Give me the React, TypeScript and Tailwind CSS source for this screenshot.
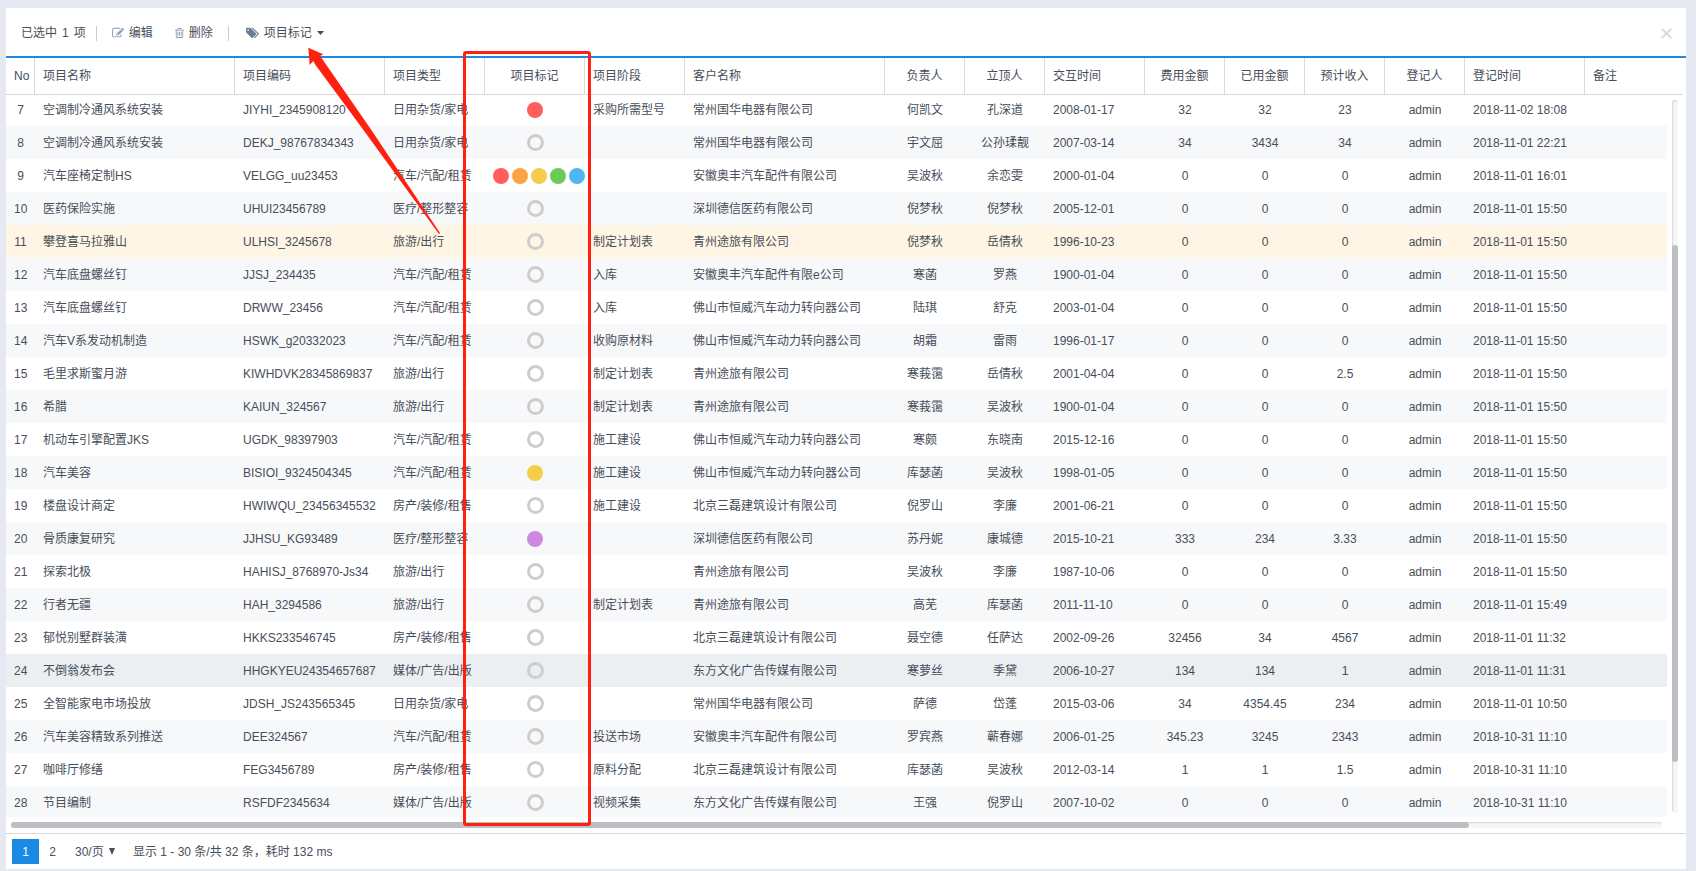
import React, { useState } from "react";
import clsx from "clsx";

type Mark = "red" | "orange" | "yellow" | "green" | "blue" | "purple";

interface Project {
  no: number;
  name: string;
  code: string;
  type: string;
  marks: Mark[];
  stage: string;
  customer: string;
  owner: string;
  leader: string;
  date: string;
  cost: string;
  used: string;
  income: string;
  createdAt: string;
}

const markColors: Record<Mark, string> = {
  red: "bg-[#ff5f5c]",
  orange: "bg-[#fba446]",
  yellow: "bg-[#f5cd4b]",
  green: "bg-[#6dcb54]",
  blue: "bg-[#4db6f3]",
  purple: "bg-[#d087e2]",
};

const columns = [
  { title: "No", width: "w-[29px]", center: true },
  { title: "项目名称", width: "w-[200px]" },
  { title: "项目编码", width: "w-[150px]" },
  { title: "项目类型", width: "w-[100px]" },
  { title: "项目标记", width: "w-[100px]", center: true },
  { title: "项目阶段", width: "w-[100px]" },
  { title: "客户名称", width: "w-[200px]" },
  { title: "负责人", width: "w-[80px]", center: true },
  { title: "立顶人", width: "w-[80px]", center: true },
  { title: "交互时间", width: "w-[100px]" },
  { title: "费用金额", width: "w-[80px]", center: true },
  { title: "已用金额", width: "w-[80px]", center: true },
  { title: "预计收入", width: "w-[80px]", center: true },
  { title: "登记人", width: "w-[80px]", center: true },
  { title: "登记时间", width: "w-[120px]" },
  { title: "备注", width: "" },
];

function project(
  no: number,
  name: string,
  code: string,
  type: string,
  marks: Mark[],
  stage: string,
  customer: string,
  owner: string,
  leader: string,
  date: string,
  amounts: [string, string, string],
  createdAt: string,
): Project {
  const [cost, used, income] = amounts;
  return { no, name, code, type, marks, stage, customer, owner, leader, date, cost, used, income, createdAt };
}

const ZERO: [string, string, string] = ["0", "0", "0"];
const CAR = "汽车/汽配/租赁";
const TRAVEL = "旅游/出行";
const HOME = "日用杂货/家电";
const HOUSE = "房产/装修/租售";
const MEDICAL = "医疗/整形整容";
const MEDIA = "媒体/广告/出版";

const projects: Project[] = [
  project(7, "空调制冷通风系统安装", "JIYHI_2345908120", HOME, ["red"], "采购所需型号", "常州国华电器有限公司", "何凯文", "孔深道", "2008-01-17", ["32", "32", "23"], "2018-11-02 18:08"),
  project(8, "空调制冷通风系统安装", "DEKJ_98767834343", HOME, [], "", "常州国华电器有限公司", "宇文屈", "公孙瑈靓", "2007-03-14", ["34", "3434", "34"], "2018-11-01 22:21"),
  project(9, "汽车座椅定制HS", "VELGG_uu23453", CAR, ["red", "orange", "yellow", "green", "blue"], "", "安徽奥丰汽车配件有限公司", "吴波秋", "余恋雯", "2000-01-04", ZERO, "2018-11-01 16:01"),
  project(10, "医药保险实施", "UHUI23456789", MEDICAL, [], "", "深圳德信医药有限公司", "倪梦秋", "倪梦秋", "2005-12-01", ZERO, "2018-11-01 15:50"),
  project(11, "攀登喜马拉雅山", "ULHSI_3245678", TRAVEL, [], "制定计划表", "青州途旅有限公司", "倪梦秋", "岳倩秋", "1996-10-23", ZERO, "2018-11-01 15:50"),
  project(12, "汽车底盘螺丝钉", "JJSJ_234435", CAR, [], "入库", "安徽奥丰汽车配件有限e公司", "寒菡", "罗燕", "1900-01-04", ZERO, "2018-11-01 15:50"),
  project(13, "汽车底盘螺丝钉", "DRWW_23456", CAR, [], "入库", "佛山市恒威汽车动力转向器公司", "陆琪", "舒克", "2003-01-04", ZERO, "2018-11-01 15:50"),
  project(14, "汽车V系发动机制造", "HSWK_g20332023", CAR, [], "收购原材料", "佛山市恒威汽车动力转向器公司", "胡霜", "雷雨", "1996-01-17", ZERO, "2018-11-01 15:50"),
  project(15, "毛里求斯蜜月游", "KIWHDVK28345869837", TRAVEL, [], "制定计划表", "青州途旅有限公司", "寒莪霭", "岳倩秋", "2001-04-04", ["0", "0", "2.5"], "2018-11-01 15:50"),
  project(16, "希腊", "KAIUN_324567", TRAVEL, [], "制定计划表", "青州途旅有限公司", "寒莪霭", "吴波秋", "1900-01-04", ZERO, "2018-11-01 15:50"),
  project(17, "机动车引擎配置JKS", "UGDK_98397903", CAR, [], "施工建设", "佛山市恒威汽车动力转向器公司", "寒颇", "东晓南", "2015-12-16", ZERO, "2018-11-01 15:50"),
  project(18, "汽车美容", "BISIOI_9324504345", CAR, ["yellow"], "施工建设", "佛山市恒威汽车动力转向器公司", "库瑟菡", "吴波秋", "1998-01-05", ZERO, "2018-11-01 15:50"),
  project(19, "楼盘设计商定", "HWIWQU_23456345532", HOUSE, [], "施工建设", "北京三磊建筑设计有限公司", "倪罗山", "李廉", "2001-06-21", ZERO, "2018-11-01 15:50"),
  project(20, "骨质康复研究", "JJHSU_KG93489", MEDICAL, ["purple"], "", "深圳德信医药有限公司", "苏丹妮", "康城德", "2015-10-21", ["333", "234", "3.33"], "2018-11-01 15:50"),
  project(21, "探索北极", "HAHISJ_8768970-Js34", TRAVEL, [], "", "青州途旅有限公司", "吴波秋", "李廉", "1987-10-06", ZERO, "2018-11-01 15:50"),
  project(22, "行者无疆", "HAH_3294586", TRAVEL, [], "制定计划表", "青州途旅有限公司", "高芜", "库瑟菡", "2011-11-10", ZERO, "2018-11-01 15:49"),
  project(23, "郁悦别墅群装潢", "HKKS233546745", HOUSE, [], "", "北京三磊建筑设计有限公司", "聂空德", "任萨达", "2002-09-26", ["32456", "34", "4567"], "2018-11-01 11:32"),
  project(24, "不倒翁发布会", "HHGKYEU24354657687", MEDIA, [], "", "东方文化广告传媒有限公司", "寒萝丝", "季黛", "2006-10-27", ["134", "134", "1"], "2018-11-01 11:31"),
  project(25, "全智能家电市场投放", "JDSH_JS243565345", HOME, [], "", "常州国华电器有限公司", "萨德", "岱蓬", "2015-03-06", ["34", "4354.45", "234"], "2018-11-01 10:50"),
  project(26, "汽车美容精致系列推送", "DEE324567", CAR, [], "投送市场", "安徽奥丰汽车配件有限公司", "罗宾燕", "蕲春娜", "2006-01-25", ["345.23", "3245", "2343"], "2018-10-31 11:10"),
  project(27, "咖啡厅修缮", "FEG3456789", HOUSE, [], "原料分配", "北京三磊建筑设计有限公司", "库瑟菡", "吴波秋", "2012-03-14", ["1", "1", "1.5"], "2018-10-31 11:10"),
  project(28, "节目编制", "RSFDF2345634", MEDIA, [], "视频采集", "东方文化广告传媒有限公司", "王强", "倪罗山", "2007-10-02", ZERO, "2018-10-31 11:10"),
];

function EditIcon() {
  return (
    <svg className="size-3 fill-[#8497ab]" viewBox="0 0 1792 1792" aria-hidden="true">
      <path d="M888 1184l116-116-152-152-116 116v56h96v96h56zm440-720q-16-16-33 1l-350 350q-17 17-1 33t33-1l350-350q17-17 1-33zm80 594v190q0 119-84.5 203.5t-203.5 84.5h-832q-119 0-203.5-84.5t-84.5-203.5v-832q0-119 84.5-203.5t203.5-84.5h832q63 0 117 25 15 7 18 23 3 17-9 29l-49 49q-14 14-32 8-23-6-45-6h-832q-66 0-113 47t-47 113v832q0 66 47 113t113 47h832q66 0 113-47t47-113v-126q0-13 9-22l64-64q15-15 35-7t20 29zm-96-738l288 288-672 672h-288v-288zm444 132l-92 92-288-288 92-92q28-28 68-28t68 28l152 152q28 28 28 68t-28 68z" />
    </svg>
  );
}

function TrashIcon() {
  return (
    <svg className="h-3 w-[9px] fill-[#8497ab]" viewBox="192 0 1408 1792" aria-hidden="true">
      <path d="M704 736v576q0 14-9 23t-23 9h-64q-14 0-23-9t-9-23v-576q0-14 9-23t23-9h64q14 0 23 9t9 23zm256 0v576q0 14-9 23t-23 9h-64q-14 0-23-9t-9-23v-576q0-14 9-23t23-9h64q14 0 23 9t9 23zm256 0v576q0 14-9 23t-23 9h-64q-14 0-23-9t-9-23v-576q0-14 9-23t23-9h64q14 0 23 9t9 23zm128 724v-948h-896v948q0 22 7 40.5t14.5 27 10.5 8.5h832q3 0 10.5-8.5t14.5-27 7-40.5zm-672-1076h448l-48-117q-7-9-17-11h-317q-10 2-17 11zm928 32v64q0 14-9 23t-23 9h-96v948q0 83-47 143.5t-113 60.5h-832q-66 0-113-58.5t-47-141.5v-952h-96q-14 0-23-9t-9-23v-64q0-14 9-23t23-9h309l70-167q15-37 54-63t79-26h320q40 0 79 26t54 63l70 167h309q14 0 23 9t9 23z" />
    </svg>
  );
}

function TagsIcon() {
  return (
    <svg className="h-3 w-[13px] fill-[#687d94]" viewBox="0 0 1920 1792" aria-hidden="true">
      <path d="M448 448q0-53-37.5-90.5t-90.5-37.5-90.5 37.5-37.5 90.5 37.5 90.5 90.5 37.5 90.5-37.5 37.5-90.5zm1067 576q0 53-37 90l-491 492q-39 37-91 37-53 0-90-37l-715-716q-38-37-64.5-101t-26.5-117v-416q0-52 38-90t90-38h416q53 0 117 26.5t102 64.5l715 714q37 39 37 91zm384 0q0 53-37 90l-491 492q-39 37-91 37-36 0-59-14t-53-45l470-470q37-37 37-90 0-52-37-91l-715-714q-38-38-102-64.5t-117-26.5h224q53 0 117 26.5t102 64.5l715 714q37 39 37 91z" />
    </svg>
  );
}

function Columns() {
  return (
    <colgroup>
      {columns.map((col) => (
        <col key={col.title} className={col.width} />
      ))}
    </colgroup>
  );
}

function MarkDots({ marks }: { marks: Mark[] }) {
  if (marks.length === 0) {
    return <div className="mx-auto size-[17px] rounded-full border-3 border-[#cdcdcd]" />;
  }
  return (
    <div className="mx-auto flex w-max gap-[3px]">
      {marks.map((mark) => (
        <span key={mark} className={clsx("size-4 rounded-full", markColors[mark])} />
      ))}
    </div>
  );
}

export default function App() {
  const [selectedNo, setSelectedNo] = useState(11);
  const [pageSize, setPageSize] = useState("30");

  return (
    <div className="h-screen bg-[#e6e9f2] pt-2 pr-2.5 pb-0.5 pl-1.5 font-['Liberation_Sans','Noto_Sans_CJK_SC',sans-serif] text-xs text-[#474e59]">
      <div className="relative flex h-full flex-col bg-white">
        <div className="flex h-[50px] shrink-0 items-center border-b-2 border-[#1a8ae5] pt-0.5 pr-3.5 pl-[15px]">
          <p className="flex gap-[5px]">
            已选中 <span>1</span> <span>项</span>
          </p>
          <span className="mr-[15px] ml-[10px] h-[15px] w-px bg-[#ccc]" />
          <button className="flex items-center gap-[5px]">
            <EditIcon />
            编辑
          </button>
          <button className="ml-[22px] flex items-center gap-[5px]">
            <TrashIcon />
            删除
          </button>
          <span className="mr-[17px] ml-[15px] h-[15px] w-px bg-[#ccc]" />
          <button className="flex items-center gap-[5px]">
            <TagsIcon />
            项目标记
            <svg className="h-1 w-[7px] fill-[#474e59]" viewBox="0 0 7 4" aria-hidden="true">
              <path d="M0 0h7L3.5 4z" />
            </svg>
          </button>
          <button className="ml-auto" aria-label="关闭">
            <svg className="size-[11px] stroke-[#dcdcdc] stroke-2" viewBox="0 0 11 11" aria-hidden="true">
              <path d="M.7.7l9.6 9.6M10.3.7L.7 10.3" />
            </svg>
          </button>
        </div>

        <div className="mr-[3px] shrink-0 border-b border-[#dadada]">
          <table className="w-full table-fixed border-separate border-spacing-0">
            <Columns />
            <thead>
              <tr>
                {columns.map((col) => (
                  <th
                    key={col.title}
                    className={clsx(
                      "h-9 border-r border-[#dadada] px-2 font-normal whitespace-nowrap last:border-r-0",
                      col.center ? "text-center" : "text-left",
                    )}
                  >
                    {col.title}
                  </th>
                ))}
              </tr>
            </thead>
          </table>
        </div>

        <div className="flex min-h-0 flex-1">
          <div className="flex-1 overflow-hidden">
            {/* the list is scrolled, so the first row sits partly under the header */}
            <table className="-mt-0.5 w-full table-fixed">
              <Columns />
              <tbody>
                {projects.map((p) => {
                  const cells = [
                    p.no,
                    p.name,
                    p.code,
                    p.type,
                    <MarkDots marks={p.marks} />,
                    p.stage,
                    p.customer,
                    p.owner,
                    p.leader,
                    p.date,
                    p.cost,
                    p.used,
                    p.income,
                    "admin",
                    p.createdAt,
                    "",
                  ];
                  return (
                    <tr
                      key={p.no}
                      onClick={() => setSelectedNo(p.no)}
                      className={clsx(
                        p.no === selectedNo
                          ? "bg-[#fff5e4]"
                          : p.no === 24
                            ? "bg-[#ebeff2]"
                            : p.no % 2 === 0
                              ? "bg-[#f7f8fa]"
                              : "bg-white",
                      )}
                    >
                      {cells.map((cell, i) => (
                        <td
                          key={columns[i].title}
                          className={clsx(
                            "h-[33px] px-2 whitespace-nowrap",
                            columns[i].center && "text-center",
                          )}
                        >
                          {cell}
                        </td>
                      ))}
                    </tr>
                  );
                })}
              </tbody>
            </table>
          </div>
          <div className="flex w-[19px] py-[5px] pl-[5px]">
            <div className="w-1.5 rounded-full bg-[#f7f7f7] shadow-[inset_1px_1px_2px_#d4d4d4]">
              <div className="h-[20.4%]" />
              <div className="h-[72.6%] rounded-full bg-[#bdbec3]" />
            </div>
          </div>
        </div>

        <div className="h-4 shrink-0 pt-[5px] pr-6 pl-[5px]">
          <div className="h-1.5 rounded-full bg-[#f7f7f7] shadow-[inset_1px_1px_2px_#d4d4d4]">
            <div className="h-full w-[88.3%] rounded-full bg-[#bdbec3]" />
          </div>
        </div>

        <div className="flex h-9 shrink-0 items-center border-t border-[#dadada] pl-1.5">
          <button className="h-[25px] w-[27px] bg-[#1a8ae5] text-white">1</button>
          <button className="h-[25px] w-[27px]">2</button>
          <div className="relative ml-[9px] flex items-center">
            <select
              aria-label="每页条数"
              value={pageSize}
              onChange={(e) => setPageSize(e.target.value)}
              className="w-10 appearance-none bg-transparent"
            >
              <option value="30">30/页</option>
              <option value="50">50/页</option>
            </select>
            <svg
              className="pointer-events-none absolute right-0 h-[7px] w-1.5 fill-[#474e59]"
              viewBox="0 0 6 7"
              aria-hidden="true"
            >
              <path d="M0 0h6L3 7z" />
            </svg>
          </div>
          <span className="ml-[18px]">显示 1 - 30 条/共 32 条，耗时 132 ms</span>
        </div>

        {/* annotation over the mark column and the toolbar menu */}
        <div className="pointer-events-none absolute top-[43px] bottom-[43px] left-[457px] w-32 rounded-[3px] border-3 border-[#ff2010]" />
        <svg
          className="pointer-events-none absolute top-[38px] left-[300px] h-[190px] w-[136px] fill-[#ff2010]"
          viewBox="0 0 136 190"
          aria-hidden="true"
        >
          <path d="M2.3 1.7L17.3 8.3L14.2 10L19 17L64 82L134 187L133 188L56 82L9.5 19L7.2 15L3.7 19Z" />
        </svg>
      </div>
    </div>
  );
}
